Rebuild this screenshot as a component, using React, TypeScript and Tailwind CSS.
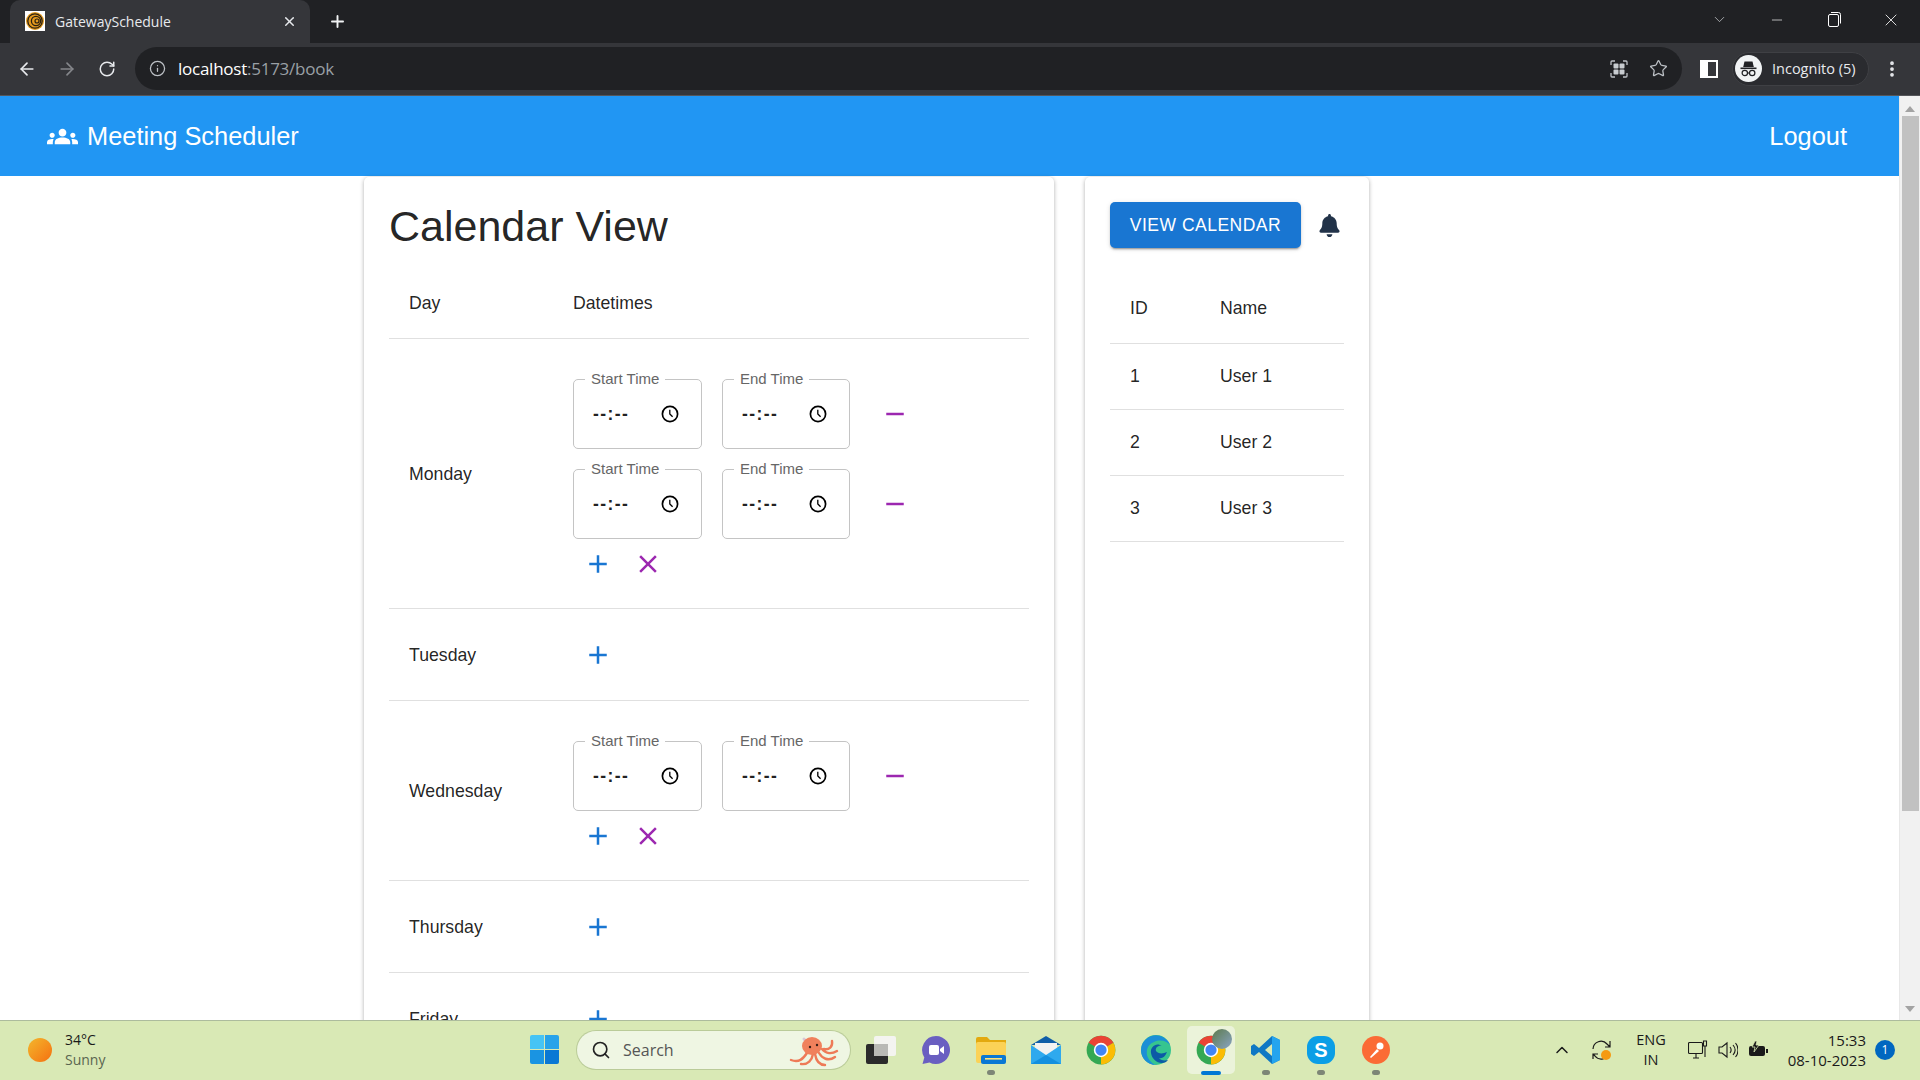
import { ArrowLeft, ArrowRight, ChevronDown, ChevronUp, Info, Minus, RotateCw, Search, Star, X, Plus, MoreVertical } from "lucide-react";
import { FaBell } from "react-icons/fa";
import { MdAdd, MdClose, MdGroups, MdRemove } from "react-icons/md";

const winFont = "font-['Open_Sans','Noto_Sans',sans-serif]";
const cardShadow = "shadow-[0_1px_4px_0_rgba(0,0,0,0.32)]";

function Favicon() {
  return (
    <svg width="20" height="20" viewBox="0 0 20 20">
      <rect width="20" height="20" fill="#fff" />
      <circle cx="10" cy="10" r="9" fill="#e59a1d" />
      <circle cx="10" cy="10" r="7.2" fill="none" stroke="#2a2113" strokeWidth="1.3" />
      <circle cx="11" cy="10" r="4.6" fill="none" stroke="#2a2113" strokeWidth="1.3" />
      <circle cx="12" cy="10" r="2" fill="none" stroke="#2a2113" strokeWidth="1.2" />
    </svg>
  );
}

function ChromeLogo({ size = 30 }: { size?: number }) {
  return (
    <svg width={size} height={size} viewBox="0 0 48 48">
      <circle cx="24" cy="24" r="23" fill="#34a853" />
      <path d="M24 24 L4.1 12.5 A23 23 0 0 1 43.9 12.5 Z" fill="#ea4335" />
      <path d="M24 24 L43.9 12.5 A23 23 0 0 1 24 47 Z" fill="#fbbc04" />
      <circle cx="24" cy="24" r="11.5" fill="#fff" />
      <circle cx="24" cy="24" r="9" fill="#4285f4" />
    </svg>
  );
}

function RestoreIcon() {
  return (
    <svg width="13" height="15" viewBox="0 0 13 15" fill="none" stroke="#fff" strokeWidth="1">
      <rect x="0.5" y="2.5" width="10" height="12" rx="1.5" />
      <path d="M3 0.5h7.5a2 2 0 0 1 2 2v9" />
    </svg>
  );
}

function TabStrip() {
  return (
    <div className="flex h-[43px] items-end bg-[#202124] text-white">
      <div className="ml-[10px] flex h-[43px] w-[300px] items-center rounded-t-[10px] bg-[#35363a] pb-px pl-[15px] pr-[13px]">
        <Favicon />
        <span className={`ml-[10px] flex-1 text-[14px] text-[#e8eaed] ${winFont}`}>GatewaySchedule</span>
        <X size={15} strokeWidth={2.4} className="text-[#e8eaed]" />
      </div>
      <div className="ml-[18px] flex h-[43px] items-center">
        <Plus size={19} strokeWidth={2.4} className="text-[#f1f3f4]" />
      </div>
      <div className="ml-auto flex h-[39px] items-center self-start pr-[19px]">
        <ChevronDown size={17} strokeWidth={1} className="text-[#d5d7da]" />
        <Minus size={16} strokeWidth={1} className="ml-[41px] text-white" />
        <div className="ml-[43px]"><RestoreIcon /></div>
        <X size={20} strokeWidth={1} className="ml-[40px] text-white" />
      </div>
    </div>
  );
}

function AppGrid() {
  return (
    <svg width="18" height="18" viewBox="0 0 18 18" fill="none">
      <path d="M1 5V2a1 1 0 0 1 1-1h3M13 1h3a1 1 0 0 1 1 1v3M17 13v3a1 1 0 0 1-1 1h-3M5 17H2a1 1 0 0 1-1-1v-3" stroke="#bdc1c6" strokeWidth="1.3" />
      <rect x="3.5" y="3.5" width="5" height="5" rx="1" fill="#c8ccd0" />
      <rect x="9.5" y="3.5" width="5" height="5" rx="1" fill="#c8ccd0" />
      <rect x="3.5" y="9.5" width="5" height="5" rx="1" fill="#c8ccd0" />
      <rect x="9.5" y="9.5" width="5" height="5" rx="1" fill="#c8ccd0" />
    </svg>
  );
}

function IncognitoAvatar() {
  return (
    <svg width="27" height="27" viewBox="0 0 27 27">
      <circle cx="13.5" cy="13.5" r="13.5" fill="#f1f3f4" />
      <path d="M9.5 6.5h8l1.3 5.5H8.2z" fill="#202124" />
      <rect x="5.5" y="12.5" width="16" height="1.6" fill="#202124" />
      <circle cx="9.8" cy="18" r="2.7" fill="none" stroke="#202124" strokeWidth="1.2" />
      <circle cx="17.2" cy="18" r="2.7" fill="none" stroke="#202124" strokeWidth="1.2" />
      <path d="M12.5 18h2" stroke="#202124" strokeWidth="1.2" />
    </svg>
  );
}

function Toolbar() {
  return (
    <div className="flex h-[53px] items-center border-b border-[#55565a] bg-[#35363a] pb-px">
      <ArrowLeft size={20} strokeWidth={2} className="ml-[17px] text-[#e8eaed]" />
      <ArrowRight size={20} strokeWidth={2} className="ml-[20px] text-[#85878b]" />
      <RotateCw size={18} strokeWidth={2} className="ml-[21px] text-[#e8eaed]" />
      <div className="ml-[19px] flex h-[43px] w-[1547px] items-center rounded-full bg-[#202124] pl-[14px]">
        <Info size={17} strokeWidth={1.8} className="text-[#bdc1c6]" />
        <span className={`ml-[12px] text-[17px] tracking-[-0.25px] ${winFont}`}>
          <span className="text-white">localhost</span>
          <span className="text-[#9aa0a6]">:5173/book</span>
        </span>
        <div className="ml-auto flex items-center pr-[14px]">
          <AppGrid />
          <Star size={19} strokeWidth={1.6} className="ml-[21px] text-[#bdc1c6]" />
        </div>
      </div>
      <div className="ml-[18px] flex h-[18px] w-[18px] justify-end border-[2.5px] border-white bg-white">
        <div className="h-full w-[8px] bg-[#35363a]" />
      </div>
      <div className="ml-[14px] flex h-[34px] w-[137px] items-center rounded-full border border-[#3f4044] bg-[#2a2b2f] pl-[2px]">
        <IncognitoAvatar />
        <span className={`ml-[10px] text-[14.5px] text-[#e8eaed] ${winFont}`}>Incognito (5)</span>
      </div>
      <MoreVertical size={20} strokeWidth={2.5} className="ml-[13px] text-[#e8eaed]" />
    </div>
  );
}

function ClockIcon() {
  return (
    <svg width="18" height="18" viewBox="0 0 18 18" fill="none" stroke="#000" strokeWidth="1.7">
      <circle cx="9" cy="9" r="7.6" />
      <path d="M8.8 4.8V9l2.8 2.8" strokeWidth="1.3" />
    </svg>
  );
}

function TimeField({ label, width }: { label: string; width: string }) {
  return (
    <div className={`relative flex h-[70px] items-center justify-between rounded-[5px] border border-[#c4c4c4] pl-[19px] pr-[22px] ${width}`}>
      <span className="absolute -top-[10px] left-[11px] bg-white px-[6px] text-[15px] leading-[18px] text-[#666]">{label}</span>
      <span className="pt-px text-[17.5px] font-bold tracking-[1.4px] text-[#222]">--:--</span>
      <ClockIcon />
    </div>
  );
}

function TimeRow() {
  return (
    <div className="flex h-[90px] items-start pt-[18px]">
      <TimeField label="Start Time" width="w-[129px]" />
      <div className="w-[20px]" />
      <TimeField label="End Time" width="w-[128px]" />
      <div className="ml-[20px] flex h-[69px] w-[50px] items-center justify-center">
        <MdRemove size={30} className="text-[#9c27b0]" />
      </div>
    </div>
  );
}

function DayRow({ day, slots }: { day: string; slots: number }) {
  return (
    <div className={`flex items-center border-b border-[#e0e0e0] ${slots === 0 ? "h-[92px]" : "py-[22px]"}`}>
      <div className="w-[184px] pt-px pl-[20px] text-[17.7px]">{day}</div>
      <div>
        {Array.from({ length: slots }).map((_, i) => (
          <TimeRow key={i} />
        ))}
        <div className="flex h-[45px]">
          <div className="flex w-[50px] items-center justify-center">
            <MdAdd size={30} className="text-[#1976d2]" />
          </div>
          {slots > 0 && (
            <div className="flex w-[50px] items-center justify-center">
              <MdClose size={30} className="text-[#9c27b0]" />
            </div>
          )}
        </div>
      </div>
    </div>
  );
}

function CalendarCard() {
  const days = [
    { day: "Monday", slots: 2 },
    { day: "Tuesday", slots: 0 },
    { day: "Wednesday", slots: 1 },
    { day: "Thursday", slots: 0 },
    { day: "Friday", slots: 0 },
    { day: "Saturday", slots: 0 },
    { day: "Sunday", slots: 0 },
  ];
  return (
    <div className={`w-[690px] rounded-[5px] bg-white px-[25px] pt-[25px] ${cardShadow}`}>
      <h1 className="text-[43px] leading-[48px] font-normal">Calendar View</h1>
      <div className="mt-[18px] flex h-[71px] items-center border-b border-[#e0e0e0] text-[17.7px] font-medium">
        <div className="w-[184px] pl-[20px]">Day</div>
        <div>Datetimes</div>
      </div>
      {days.map((d) => (
        <DayRow key={d.day} day={d.day} slots={d.slots} />
      ))}
    </div>
  );
}

function UsersCard() {
  const users = [
    { id: 1, name: "User 1" },
    { id: 2, name: "User 2" },
    { id: 3, name: "User 3" },
  ];
  return (
    <div className={`w-[284px] rounded-[5px] bg-white px-[25px] pt-[25px] ${cardShadow}`}>
      <div className="flex items-center">
        <button className="h-[46px] w-[191px] rounded-[5px] bg-[#1976d2] text-[17.5px] tracking-[0.5px] text-white uppercase shadow-[0_3px_1px_-2px_rgba(0,0,0,0.2),0_2px_2px_0_rgba(0,0,0,0.14),0_1px_5px_0_rgba(0,0,0,0.12)]">
          View Calendar
        </button>
        <FaBell size={23} className="ml-[17px] text-[#223349]" />
      </div>
      <div className="mt-[24px] flex h-[72px] w-[234px] items-center border-b border-[#e0e0e0] pt-px text-[17.7px] font-medium">
        <div className="w-[110px] pl-[20px]">ID</div>
        <div>Name</div>
      </div>
      {users.map((u) => (
        <div key={u.id} className="flex h-[66px] w-[234px] items-center border-b border-[#e0e0e0] text-[17.7px]">
          <div className="w-[110px] pl-[20px]">{u.id}</div>
          <div>{u.name}</div>
        </div>
      ))}
    </div>
  );
}

function Scrollbar() {
  return (
    <div className="flex w-[21px] flex-col items-center border-l border-[#e8e8e8] bg-[#f1f1f1]">
      <div className="mt-[10px] h-0 w-0 border-x-[5px] border-b-[6px] border-x-transparent border-b-[#a3a3a3]" />
      <div className="mt-[4px] h-[695px] w-[17px] bg-[#c1c1c1]" />
      <div className="mt-auto mb-[8px] h-0 w-0 border-x-[5px] border-t-[6px] border-x-transparent border-t-[#a3a3a3]" />
    </div>
  );
}

function WindowsLogo() {
  return (
    <div className="grid h-[29px] w-[29px] grid-cols-2 gap-px">
      <div className="rounded-tl-[2px] bg-[#46c4f5]" />
      <div className="rounded-tr-[2px] bg-[#27a3ea]" />
      <div className="rounded-bl-[2px] bg-[#1a94e2]" />
      <div className="rounded-br-[2px] bg-[#0a78d4]" />
    </div>
  );
}

function Octopus() {
  return (
    <svg width="50" height="34" viewBox="0 0 50 34" fill="none">
      <path d="M2 27c8 3 12-1 16-7M12 31c7 1 11-4 12-10M36 32c-6 0-9-5-10-11M46 24c-7 5-13 1-16-4M48 18c-5 3-11 3-15-2M43 8c1 6-3 9-8 8" stroke="#ee7a57" strokeWidth="2.4" strokeLinecap="round" />
      <path d="M15 6c3 3 3 8 4 11" stroke="#d9c7d6" strokeWidth="3" strokeLinecap="round" />
      <ellipse cx="23" cy="13" rx="10" ry="9" fill="#f0815c" />
      <circle cx="21" cy="14" r="1.2" fill="#3a2018" />
      <circle cx="28" cy="12" r="1.2" fill="#3a2018" />
    </svg>
  );
}

function TaskView() {
  return (
    <svg width="30" height="28" viewBox="0 0 30 28">
      <rect x="0" y="8" width="22" height="20" rx="2" fill="#2b2b2b" />
      <rect x="8" y="0" width="22" height="20" rx="2" fill="#f4f4f0" />
      <rect x="8" y="8" width="14" height="12" fill="#b9b9b5" />
    </svg>
  );
}

function MeetIcon() {
  return (
    <svg width="30" height="30" viewBox="0 0 30 30">
      <path d="M15 1a14 14 0 1 1-6.5 26.4L1.5 29l1.8-6.6A14 14 0 0 1 15 1z" fill="#6a5fc1" />
      <rect x="8" y="10" width="10" height="10" rx="2" fill="#fff" />
      <path d="M19 14l4-3v8l-4-3z" fill="#fff" />
    </svg>
  );
}

function FolderIcon() {
  return (
    <svg width="30" height="28" viewBox="0 0 30 28">
      <path d="M0 3a2 2 0 0 1 2-2h9l3 3h16v6H0z" fill="#e3a90f" />
      <rect x="0" y="6" width="30" height="21" rx="2" fill="#fbd257" />
      <rect x="5" y="19" width="25" height="9" rx="2" fill="#0a78d4" />
      <rect x="9" y="22" width="17" height="1.6" fill="#ffe27a" />
    </svg>
  );
}

function MailIcon() {
  return (
    <svg width="30" height="28" viewBox="0 0 30 28">
      <path d="M15 0L30 9H0z" fill="#0f5ea8" />
      <path d="M4 7h22v6l-11 7-11-7z" fill="#f2f2f2" />
      <path d="M0 9l15 10L30 9v19H0z" fill="#2fa9ee" />
      <path d="M0 28l15-9 15 9z" fill="#1490df" />
    </svg>
  );
}

function EdgeIcon() {
  return (
    <svg width="30" height="30" viewBox="0 0 30 30">
      <circle cx="15" cy="15" r="15" fill="#36c58f" />
      <path d="M0 15A15 15 0 0 1 29 10c-3-4-10-6-16-3C8 9 5 13 6 20c1 4 4 8 9 10C6 30 0 23 0 15z" fill="#1b8fd6" />
      <path d="M26 17c-4 2-9 2-11-1-1-3 2-6 6-5-5-4-12 0-11 7 1 7 8 12 15 9l2-2c-4 1-8 0-9-2 3 1 6-1 8-6z" fill="#0c5aa6" />
    </svg>
  );
}

function VsCodeIcon() {
  return (
    <svg width="30" height="30" viewBox="0 0 30 30">
      <path d="M21 1l8 4v20l-8 4L8 17l-5 4-3-2v-8l3-2 5 4z" fill="#0f78c4" />
      <path d="M21 1l8 4v20l-8 4z" fill="#24a4ee" />
      <path d="M21 9l-7 6 7 6z" fill="#d9e9b5" />
    </svg>
  );
}

function SkypeIcon() {
  return (
    <div className="flex h-[28px] w-[28px] items-center justify-center rounded-[11px] bg-[#0b9ee6] font-['Liberation_Sans',sans-serif] text-[20px] font-bold text-white">
      S
    </div>
  );
}

function PostmanIcon() {
  return (
    <svg width="28" height="28" viewBox="0 0 28 28">
      <circle cx="14" cy="14" r="14" fill="#fb6b35" />
      <path d="M8 21l7-8 2 2-8 7z" fill="#fff" />
      <circle cx="18" cy="10" r="3.5" fill="#fff" />
    </svg>
  );
}

function TaskIcon({ children, dot, active }: { children: React.ReactNode; dot?: boolean; active?: boolean }) {
  return (
    <div className={`relative flex h-[48px] w-[48px] items-center justify-center rounded-[5px] ${active ? "bg-[#ebf3da]" : ""}`}>
      {children}
      {dot && <div className="absolute -bottom-[1px] h-[5px] w-[8px] rounded-full bg-[#7d8676]" />}
      {active && <div className="absolute -bottom-[1px] h-[4px] w-[20px] rounded-full bg-[#0078d4]" />}
    </div>
  );
}

function TrayIcons() {
  return (
    <div className="flex items-center">
      <ChevronUp size={20} strokeWidth={1.8} className="text-[#1a1a1a]" />
      <svg width="22" height="22" viewBox="0 0 22 22" fill="none" stroke="#1a1a1a" strokeWidth="1.2" className="ml-[19px]">
        <path d="M2 10a8 8 0 0 1 14-5l3 3M19 2v6h-5M18 14a8 8 0 0 1-14 3l-2-2M2 20v-5h5" />
        <circle cx="15" cy="16" r="5" fill="#f59a12" stroke="none" />
      </svg>
    </div>
  );
}

function SystemIcons() {
  return (
    <div className="flex items-center gap-[10px]">
      <svg width="20" height="20" viewBox="0 0 20 20" fill="none" stroke="#1a1a1a" strokeWidth="1.1">
        <rect x="0.5" y="2.5" width="14" height="11" rx="1" />
        <path d="M5 18h6M8 14v4M17 6v11M15.5 1h3v5h-3z" />
      </svg>
      <svg width="20" height="20" viewBox="0 0 20 20" fill="none" stroke="#1a1a1a" strokeWidth="1.1">
        <path d="M1 7h3l5-4v14l-5-4H1zM12 7c1.5 2 1.5 4 0 6M15 5c2.6 3 2.6 7 0 10M17.5 3c3.4 4 3.4 10 0 14" />
      </svg>
      <svg width="20" height="20" viewBox="0 0 20 20">
        <rect x="1" y="6" width="16" height="10" rx="2" fill="#1a1a1a" />
        <rect x="18" y="9" width="2" height="4" fill="#1a1a1a" />
        <path d="M7 1L4 7h3l-1 5 5-7H8l1-4z" fill="#1a1a1a" stroke="#d9e9b5" strokeWidth="0.8" />
      </svg>
    </div>
  );
}

function Taskbar() {
  return (
    <div className={`flex h-[60px] items-center border-t border-[#adbc9d] bg-[#d9e9b5] pb-[2px] text-[14px] text-[#1a1a1a] ${winFont}`}>
      <div className="flex w-[530px] items-center pl-[28px]">
        <div className="h-[24px] w-[24px] rounded-full bg-gradient-to-br from-[#f2b62c] to-[#f46f0f]" />
        <div className="ml-[13px] leading-[20px]">
          <div>34°C</div>
          <div className="text-[#5a6650]">Sunny</div>
        </div>
      </div>
      <WindowsLogo />
      <div className="ml-[18px] flex h-[38px] w-[273px] items-center rounded-full bg-[#eff6e3] pr-[11px] pl-[14px] shadow-[0_0_0_1px_rgba(130,150,100,0.35)]">
        <Search size={20} strokeWidth={2} className="text-[#222]" />
        <span className="ml-[12px] flex-1 text-[16px] text-[#555]">Search</span>
        <Octopus />
      </div>
      <div className="ml-[7px] flex items-center gap-[7px]">
        <TaskIcon><TaskView /></TaskIcon>
        <TaskIcon><MeetIcon /></TaskIcon>
        <TaskIcon dot><FolderIcon /></TaskIcon>
        <TaskIcon><MailIcon /></TaskIcon>
        <TaskIcon><ChromeLogo /></TaskIcon>
        <TaskIcon><EdgeIcon /></TaskIcon>
        <TaskIcon active>
          <ChromeLogo />
          <div className="absolute top-[3px] right-[3px] h-[20px] w-[20px] rounded-full bg-gradient-to-br from-[#5d7a4a] to-[#8aa3c4]" />
        </TaskIcon>
        <TaskIcon dot><VsCodeIcon /></TaskIcon>
        <TaskIcon dot><SkypeIcon /></TaskIcon>
        <TaskIcon dot><PostmanIcon /></TaskIcon>
      </div>
      <div className="ml-auto flex items-center pr-[25px]">
        <TrayIcons />
        <div className="ml-[23px] text-center text-[14.5px] leading-[20px]">
          <div>ENG</div>
          <div>IN</div>
        </div>
        <div className="ml-[22px]"><SystemIcons /></div>
        <div className="ml-[20px] text-right text-[15px] leading-[20px]">
          <div>15:33</div>
          <div>08-10-2023</div>
        </div>
        <div className="ml-[9px] flex h-[20px] w-[20px] items-center justify-center rounded-full bg-[#0067c0] text-[12px] text-white">1</div>
      </div>
    </div>
  );
}

export default function App() {
  return (
    <div className="flex h-screen flex-col overflow-hidden font-['Liberation_Sans',Arial,sans-serif] text-[rgba(0,0,0,0.87)]">
      <TabStrip />
      <Toolbar />
      <div className="flex min-h-0 flex-1">
        <div className="min-w-0 flex-1 overflow-hidden bg-white">
          <header className="flex h-[80px] items-center justify-between bg-[#2196f3] pt-px pr-[52px] pl-[47px] text-white">
            <div className="flex items-center">
              <MdGroups size={31} />
              <span className="ml-[9px] text-[25.4px]">Meeting Scheduler</span>
            </div>
            <span className="text-[25.4px]">Logout</span>
          </header>
          <main className="flex items-stretch gap-[31px] pt-px pl-[364px]">
            <CalendarCard />
            <UsersCard />
          </main>
        </div>
        <Scrollbar />
      </div>
      <Taskbar />
    </div>
  );
}
